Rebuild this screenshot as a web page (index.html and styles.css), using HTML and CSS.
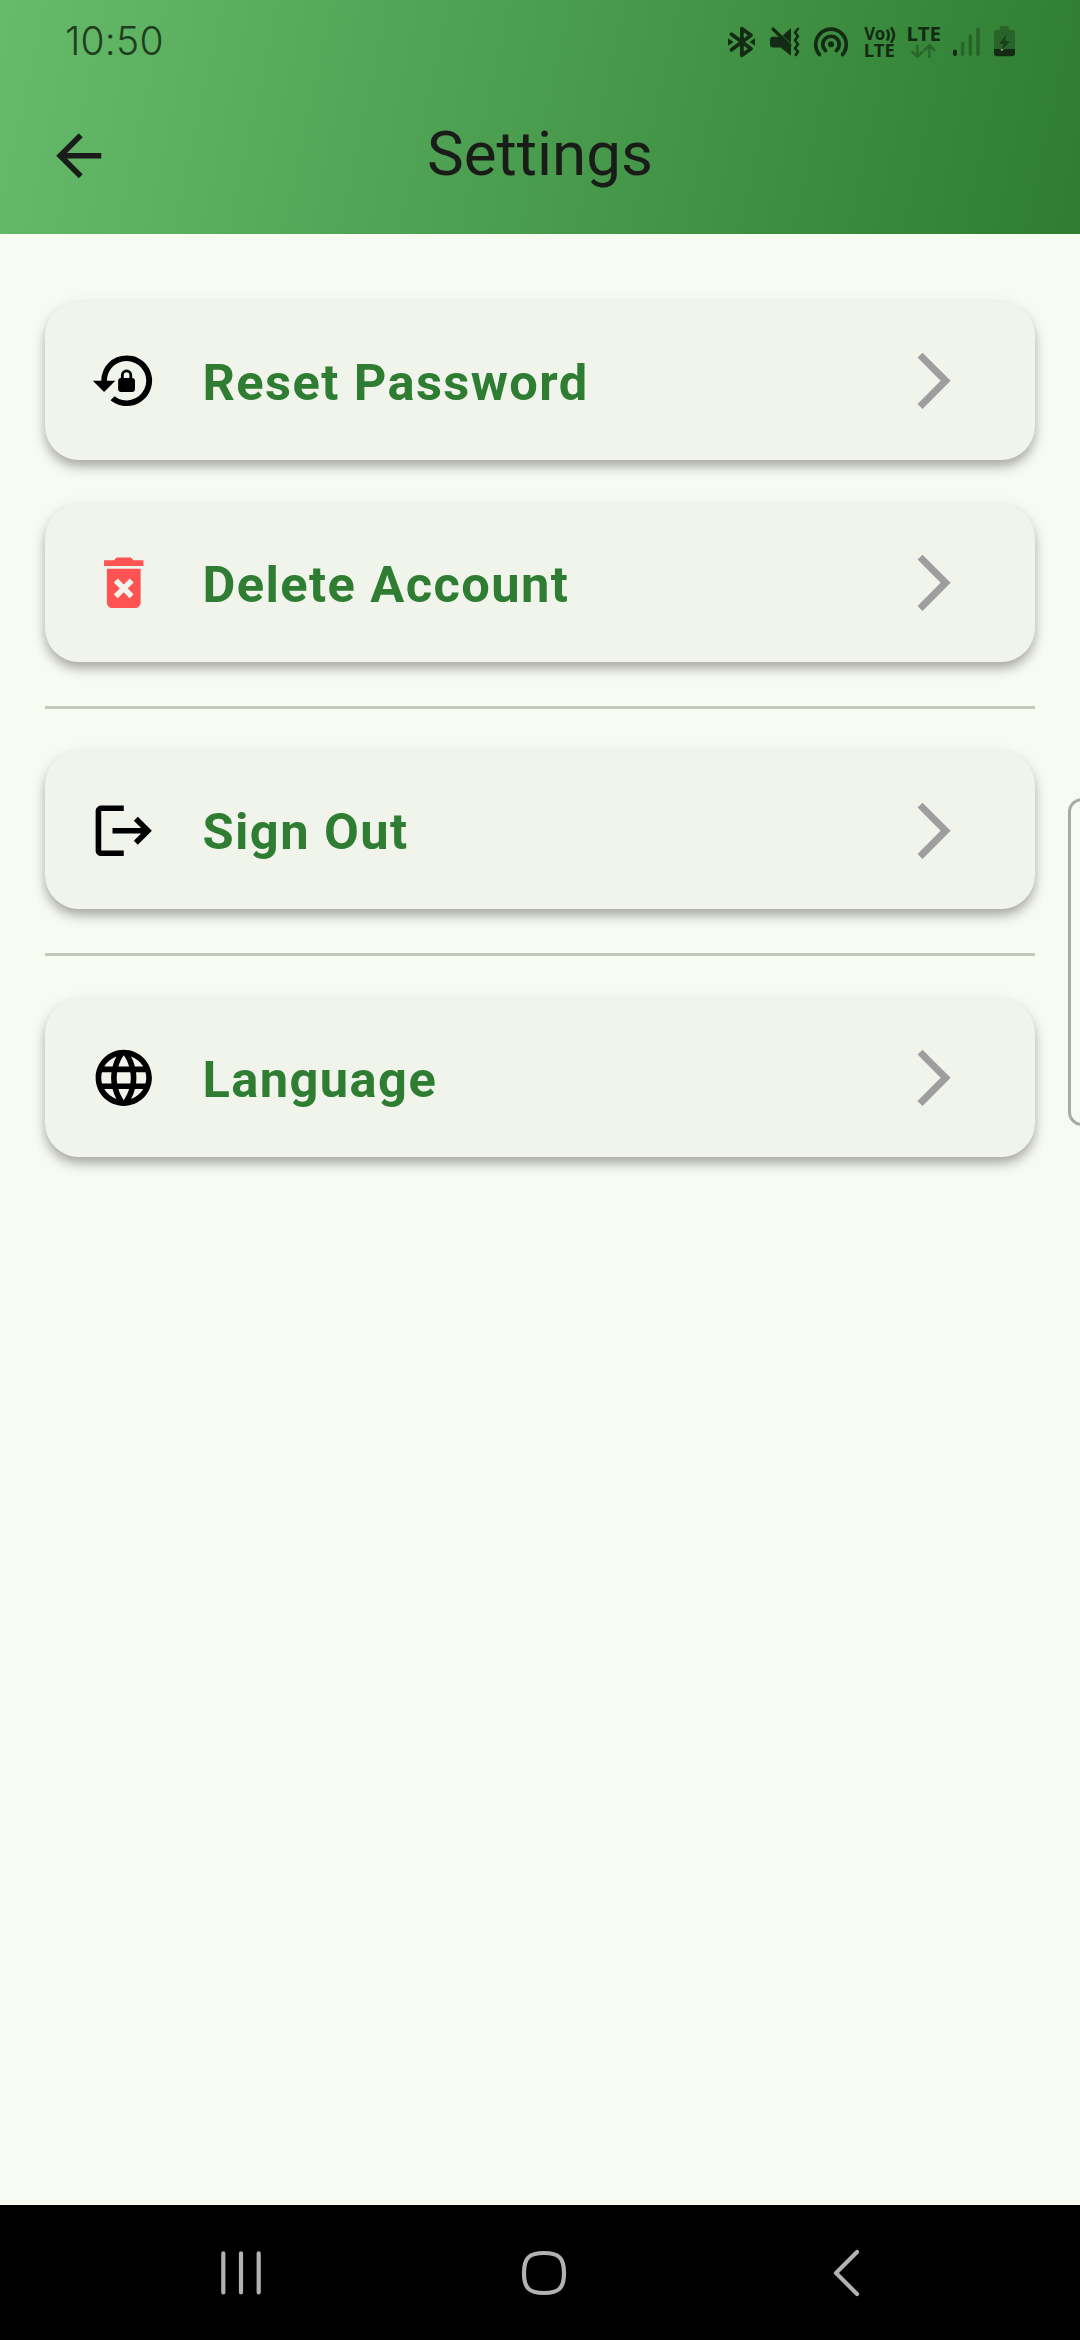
FILE: index.html
```html
<!DOCTYPE html>
<html lang="en">
<head>
<meta charset="utf-8">
<title>Settings</title>
<link rel="stylesheet" href="styles.css">
</head>
<body>
<div class="screen">
  <header class="header">
    <div class="status">
      <span class="clock">10:50</span>
      <div class="status-icons">
        <svg width="42" height="40" viewBox="720 21 42 40"><path class="line" stroke-width="3.8" d="M731.5 34.2 751 48.8 741.9 55.3V28.7L751 35.2 731.5 49.8"/><path d="M728 38.3 733.5 42 728 45.7zM755 38.3 749.5 42 755 45.7z"/></svg>
        <svg width="46" height="40" viewBox="762 21 46 40"><path d="M782.7 35.5 791 28V43.6zM773 36.8H780L791 47.6V55.8L780.5 47.4H773Q770 47.4 770 44.4V39.8Q770 36.8 773 36.8z"/><path class="line" stroke-width="3.2" d="M773 29 790 45.5"/><path class="line" stroke-width="2.6" d="M798 28.8 795 32.5 798 36.3 795 40.3 798 44.3 795 48.3 798 51.6 795.8 55"/></svg>
        <svg width="50" height="40" viewBox="808 21 50 40"><circle cx="831" cy="44.3" r="3"/><path class="line" stroke-width="3.7" d="M825.6 50.6A8.2 8.2 0 1 1 836.4 50.6M819.4 54.5A15.3 15.3 0 1 1 842.6 54.5"/></svg>
        <svg width="44" height="40" viewBox="858 21 44 40"><text class="net" x="864.3" y="40" font-size="17" textLength="21" lengthAdjust="spacingAndGlyphs">Vo</text><path class="line" stroke-width="2.6" d="M887.5 30.7Q890 35 887.5 39.5M891.5 28.2Q896.5 35 891.5 41.7"/><text class="net" x="863.8" y="57" font-size="17.4" textLength="31" lengthAdjust="spacingAndGlyphs">LTE</text></svg>
        <svg width="44" height="40" viewBox="902 21 44 40"><text class="net" x="906.6" y="40.5" font-size="19.8" textLength="34.500" lengthAdjust="spacingAndGlyphs">LTE</text><path class="line faint" stroke-width="2.6" d="M917.4 45.5V56.5M912.6 52 917.4 56.7 922.2 52M929.4 57V45.5M924.6 50 929.4 45.3 934.2 50"/></svg>
        <svg width="40" height="40" viewBox="946 21 40 40"><rect x="953" y="49.5" width="4" height="6.5" rx="2"/><g class="faint"><rect x="960.8" y="41.8" width="3.6" height="14.2" rx="1.8"/><rect x="968.5" y="34" width="3.6" height="22" rx="1.8"/><rect x="976.2" y="27.2" width="3.6" height="28.8" rx="1.8"/></g></svg>
        <svg width="38" height="40" viewBox="986 21 38 40"><path class="faint" d="M994 49V32.5Q994 30 996.5 30H999.7V27.5Q999.7 26 1001.2 26H1007.5Q1009 26 1009 27.5V30H1012.5Q1015 30 1015 32.5V49z"/><path d="M994 49H1015V53Q1015 56.3 1011.7 56.3H997.3Q994 56.3 994 53z"/><path opacity=".65" d="M1006 35 999 44H1003.5L1001 50.5 1010 41.2H1005.2z"/><path fill="#c8dcc8" d="M1000.5 49.6 1003.8 49 1001.5 51z"/></svg>
      </div>
    </div>
    <div class="toolbar">
      <svg class="icon" viewBox="0 0 24 24"><path d="M20 11H7.83l5.59-5.59L12 4l-8 8 8 8 1.41-1.41L7.83 13H20v-2z"/></svg>
      <h1 class="title">Settings</h1>
    </div>
  </header>
  <main class="list">
    <div class="card">
      <svg class="icon" viewBox="0 0 24 24"><path d="M13 3a9 9 0 0 0-9 9H1l4 4 4-4H6a7 7 0 1 1 2.7 5.5l-1.4 1.4A9 9 0 1 0 13 3zM15 11v-1a2 2 0 0 0-4 0v1c-.55 0-1 .45-1 1v3c0 .55.45 1 1 1h4c.55 0 1-.45 1-1v-3c0-.55-.45-1-1-1zm-1 0h-2v-1a1 1 0 0 1 2 0z"/></svg>
      <span class="label">Reset Password</span>
      <svg class="icon chevron" viewBox="0 0 24 24"><path d="M6.23 20.23 8 22l10-10L8 2 6.23 3.77 14.46 12z"/></svg>
    </div>
    <div class="card">
      <svg class="icon danger" viewBox="0 0 24 24"><path d="M6 19c0 1.1.9 2 2 2h8c1.100 0 2-.9 2-2V7H6v12zm2.460-7.120 1.410-1.410L12 12.590l2.120-2.120 1.410 1.410L13.410 14l2.120 2.120-1.410 1.410L12 15.410l-2.120 2.120-1.410-1.410L10.590 14zM15.500 4l-1-1h-5l-1 1H5v2h14V4z"/></svg>
      <span class="label">Delete Account</span>
      <svg class="icon chevron" viewBox="0 0 24 24"><path d="M6.23 20.23 8 22l10-10L8 2 6.23 3.77 14.46 12z"/></svg>
    </div>
    <hr class="divider">
    <div class="card">
      <svg class="icon" viewBox="0 0 24 24"><path d="m17 7-1.410 1.410L18.170 11H8v2h10.170l-2.580 2.580L17 17l5-5zM4 5h8V3H4c-1.100 0-2 .9-2 2v14c0 1.100.9 2 2 2h8v-2H4z"/></svg>
      <span class="label">Sign Out</span>
      <svg class="icon chevron" viewBox="0 0 24 24"><path d="M6.23 20.23 8 22l10-10L8 2 6.23 3.77 14.46 12z"/></svg>
    </div>
    <hr class="divider">
    <div class="card">
      <svg class="icon" viewBox="0 0 24 24"><path d="M11.990 2C6.470 2 2 6.480 2 12s4.470 10 9.990 10C17.520 22 22 17.520 22 12S17.520 2 11.990 2zm6.930 6h-2.950c-.32-1.250-.78-2.450-1.380-3.560 1.840.63 3.370 1.910 4.330 3.560zM12 4.040c.83 1.200 1.480 2.530 1.910 3.960h-3.820c.43-1.430 1.080-2.760 1.910-3.960zM4.260 14C4.100 13.360 4 12.690 4 12s.1-1.360.26-2h3.380c-.08.66-.14 1.320-.14 2s.06 1.340.14 2zm.82 2h2.950c.32 1.250.78 2.450 1.380 3.560-1.840-.63-3.370-1.900-4.330-3.560zm2.950-8H5.080c.96-1.660 2.490-2.930 4.330-3.560C8.810 5.550 8.350 6.750 8.030 8zM12 19.960c-.83-1.200-1.480-2.530-1.910-3.960h3.820c-.43 1.430-1.080 2.760-1.910 3.960zM14.340 14H9.660c-.09-.66-.16-1.320-.16-2s.07-1.350.16-2h4.680c.09.65.16 1.320.16 2s-.07 1.340-.16 2zm.25 5.560c.6-1.110 1.060-2.310 1.380-3.560h2.950c-.96 1.650-2.490 2.930-4.330 3.560zM16.360 14c.08-.66.14-1.320.14-2s-.06-1.340-.14-2h3.380c.16.64.26 1.310.26 2s-.1 1.360-.26 2z"/></svg>
      <span class="label">Language</span>
      <svg class="icon chevron" viewBox="0 0 24 24"><path d="M6.23 20.23 8 22l10-10L8 2 6.23 3.77 14.46 12z"/></svg>
    </div>
  </main>
  <div class="edge-handle"></div>
  <nav class="navbar">
    <svg width="50" height="50" viewBox="216 2248 50 50"><path d="M223.300 2253.400V2292.500M241 2253.400V2292.500M258.700 2253.400V2292.500"/></svg>
    <svg width="50" height="50" viewBox="518 2248 50 50"><path d="M543 2253C558 2253 563 2258 563 2273S558 2293 543 2293 523 2288 523 2273 528 2253 543 2253z"/></svg>
    <svg width="50" height="50" viewBox="821 2248 50 50"><path d="M857 2252 836 2273 857 2294"/></svg>
  </nav>
</div>
</body>
</html>
```

FILE: styles.css
```css
* {
  box-sizing: border-box;
}

body {
  margin: 0;
  font-family: Roboto, sans-serif;
}

.screen {
  position: relative;
  display: flex;
  flex-direction: column;
  width: 1080px;
  height: 2340px;
  overflow: hidden;
  background: #f8fbf2;
}

.header {
  height: 234.4px;
  background: linear-gradient(102.2deg, #66bb6a, #2e7d32);
}

.status {
  display: flex;
  justify-content: space-between;
  height: 77px;
  padding: 21px 56px 0 65px;
}

.clock {
  font: 350 39px/40px Inter, sans-serif;
  letter-spacing: 0.2px;
  color: #1f3d20;
}

.status-icons {
  display: flex;
  fill: #132b14;
}

.line {
  fill: none;
  stroke: #132b14;
  stroke-linecap: round;
  stroke-linejoin: round;
}

.faint {
  opacity: 0.36;
}

.net {
  font-family: "Noto Sans", sans-serif;
  font-weight: 700;
}

.toolbar {
  display: grid;
  grid-template-columns: 67.5px 1fr 67.5px;
  align-items: center;
  height: 157px;
  padding: 0 45px;
  fill: #1a1c19;
}

.icon {
  display: block;
  flex: none;
  width: 67.5px;
  height: 67.5px;
}

.title {
  margin: 0;
  padding-bottom: 3px;
  font-size: 61.9px;
  font-weight: 400;
  line-height: 75px;
  text-align: center;
  color: #1a1c19;
}

.list {
  display: flex;
  flex: 1;
  flex-direction: column;
  gap: 44px;
  padding: 67.6px 45px 0;
}

.card {
  display: flex;
  align-items: center;
  gap: 45px;
  height: 158px;
  padding: 0 67.5px 0 45px;
  border-radius: 34px;
  background: #f1f4eb;
  box-shadow: 0 8px 14px -2px rgba(0, 0, 0, 0.24), 0 5px 9px rgba(0, 0, 0, 0.1), 0 3px 18px rgba(0, 0, 0, 0.06);
}

.label {
  flex: 1;
  padding-top: 3px;
  font-size: 50.625px;
  font-weight: 700;
  letter-spacing: 1.4px;
  color: #2e7d32;
}

.danger {
  fill: #ff5252;
}

.chevron {
  fill: #9e9e9e;
}

.divider {
  width: 100%;
  height: 3px;
  margin: 0 0 -1.5px;
  border: 0;
  background: #c2c9bd;
}

.edge-handle {
  position: absolute;
  top: 798px;
  right: -21px;
  width: 33px;
  height: 328px;
  border: 3px solid #a9aba7;
  border-radius: 14px;
  background: #f8fbf4;
}

.navbar {
  display: flex;
  justify-content: space-between;
  height: 135px;
  padding: 43px 209px 0 216px;
  background: #000;
  fill: none;
  stroke: #b2b2b2;
  stroke-width: 4.2;
  stroke-linecap: round;
  stroke-linejoin: round;
}
```
